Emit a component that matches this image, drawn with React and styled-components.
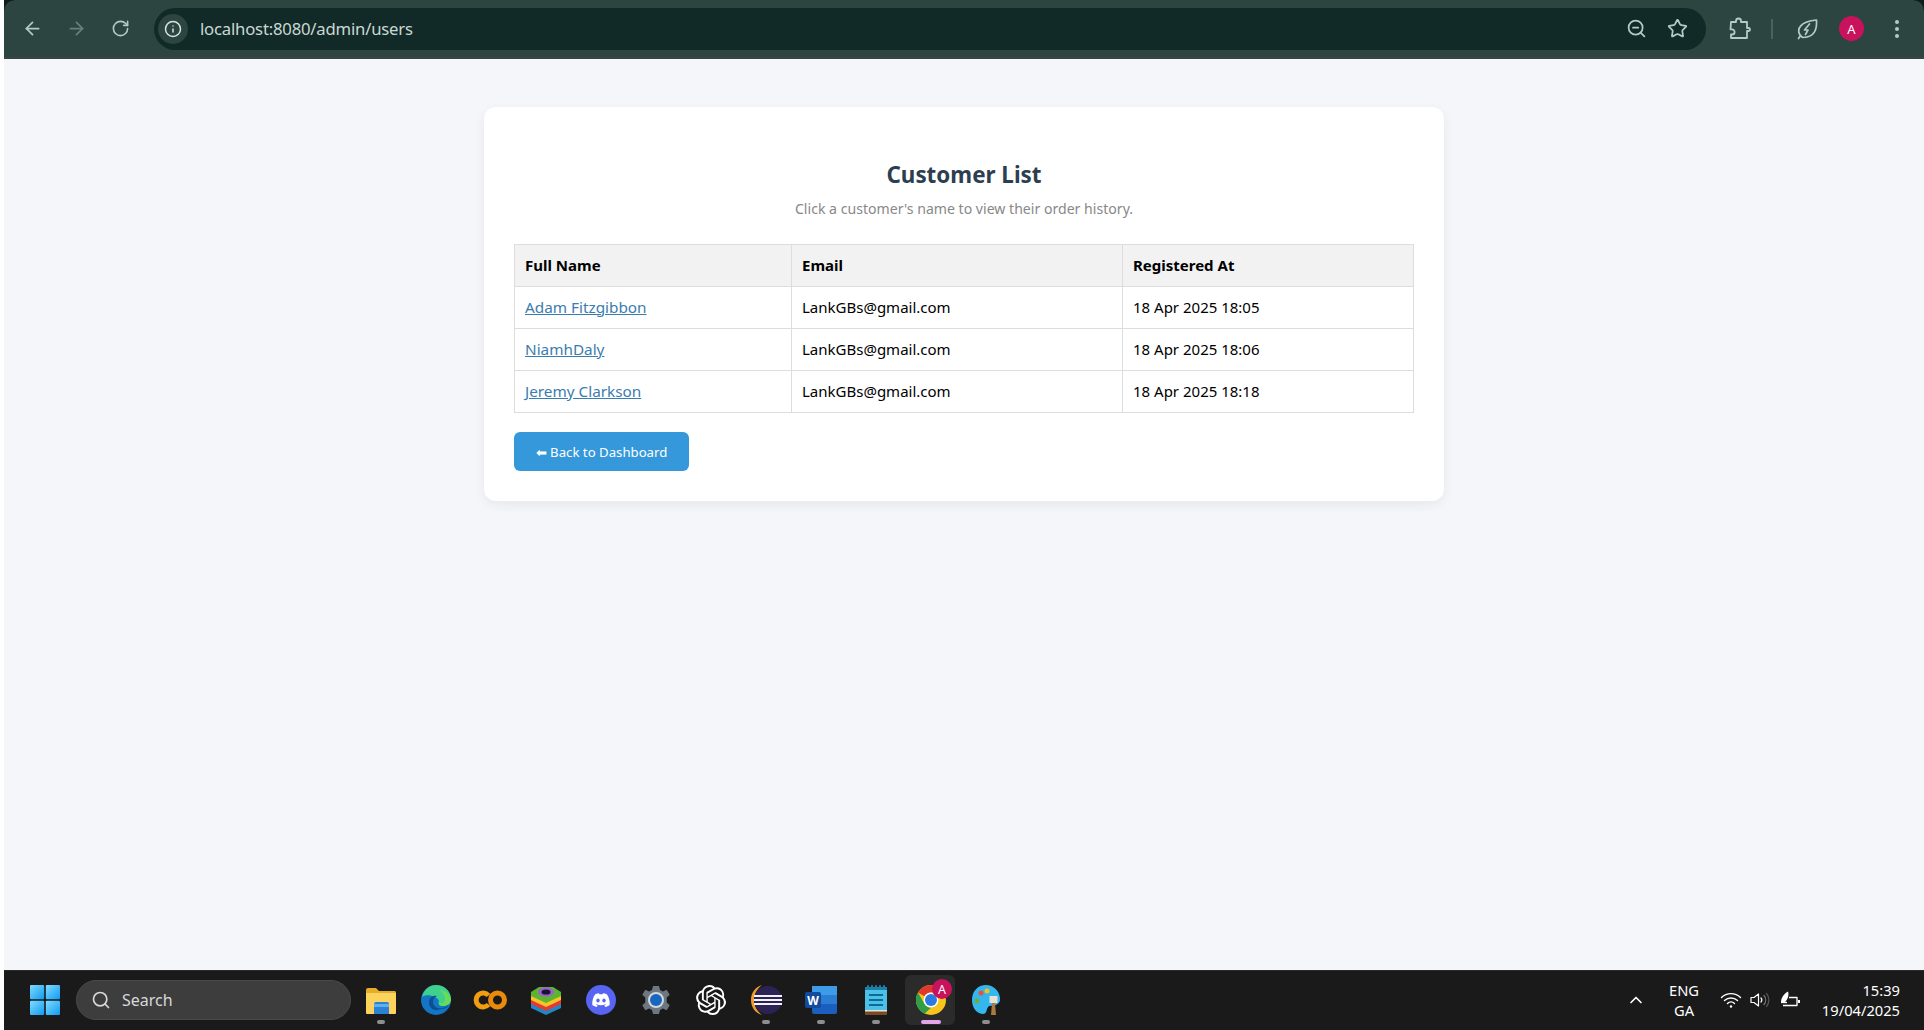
import React from "react";
import styled, { createGlobalStyle } from "styled-components";
import {
  ArrowLeft,
  ArrowRight,
  RotateCw,
  Info,
  ZoomOut,
  Star,
  Search as SearchIcon,
  ChevronUp
} from "lucide-react";
import { SiOpenai } from "react-icons/si";

const GlobalStyle = createGlobalStyle`
  html, body {
    margin: 0;
    padding: 0;
    height: 100%;
    background: #fff;
  }
  body {
    font-family: "Noto Sans", "Open Sans", sans-serif;
    overflow: hidden;
  }
  #root {
    height: 100%;
  }
`;

const Screen = styled.div`
  display: flex;
  flex-direction: column;
  width: 1920px;
  height: 1030px;
  margin-left: 4px;
`;

/* browser toolbar */
const Toolbar = styled.header`
  position: relative;
  flex: none;
  height: 57px;
  display: flex;
  align-items: center;
  background: #2c4541;
  border-bottom: 2px solid #3a4543;
  box-sizing: content-box;
  &::before,
  &::after {
    content: "";
    position: absolute;
    top: 0;
    width: 10px;
    height: 10px;
    background: radial-gradient(circle at var(--c), transparent 9px, #0f1c1a 10px);
  }
  &::before {
    left: 0;
    --c: 100% 100%;
  }
  &::after {
    right: 0;
    --c: 0 100%;
  }
`;

const NavButton = styled.div`
  width: 44px;
  height: 44px;
  flex: none;
  display: flex;
  align-items: center;
  justify-content: center;
  color: ${(p) => (p.$dim ? "#66807b" : "#b3cbc6")};
`;

const NavGroup = styled.div`
  display: flex;
  flex: none;
  padding-left: 6px;
  margin-right: 12px;
`;

const AddressBar = styled.div`
  flex: none;
  width: 1552px;
  height: 42px;
  border-radius: 21px;
  background: #122a27;
  display: flex;
  align-items: center;
  padding: 0 18px 0 4px;
  box-sizing: border-box;
  color: #c6d6d2;
`;

const InfoBadge = styled.div`
  width: 30px;
  height: 30px;
  border-radius: 50%;
  background: #2c4541;
  color: #d7e4e1;
  flex: none;
  display: flex;
  align-items: center;
  justify-content: center;
`;

const Url = styled.span`
  flex: 1;
  margin-left: 12px;
  font-size: 16.7px;
  letter-spacing: -0.2px;
  color: #c9d8d4;
`;

const AddressActions = styled.div`
  display: flex;
  align-items: center;
  gap: 20px;
  color: #b3cbc6;
`;

const ToolbarRight = styled.div`
  display: flex;
  align-items: center;
  margin-left: 21px;
  color: #b3cbc6;
`;

const ToolDivider = styled.div`
  width: 2px;
  height: 20px;
  margin: 0 22px 0 20px;
  background: #4a625e;
`;

const ProfileDot = styled.div`
  width: 25px;
  height: 25px;
  margin-left: 20px;
  border-radius: 50%;
  background: #c8135c;
  color: #fff;
  font-size: 13px;
  display: flex;
  align-items: center;
  justify-content: center;
`;

const MenuDots = styled.div`
  display: flex;
  flex-direction: column;
  gap: 3px;
  margin-left: 31px;
  i {
    display: block;
    width: 4px;
    height: 4px;
    border-radius: 50%;
    background: #b3cbc6;
  }
`;

/* page */
const Main = styled.main`
  flex: 1;
  background: #f4f6f9;
  padding-top: 48px;
  min-height: 0;
`;

const Card = styled.section`
  width: 960px;
  margin: 0 auto;
  box-sizing: border-box;
  padding: 50px 30px 30px;
  background: #fff;
  border-radius: 12px;
  box-shadow: 0 4px 12px rgba(0, 0, 0, 0.06);
`;

const Title = styled.h2`
  margin: 0;
  text-align: center;
  font-size: 22.4px;
  line-height: 36px;
  font-weight: 700;
  color: #2c3e50;
`;

const Subtitle = styled.p`
  margin: 6px 0 0;
  text-align: center;
  font-size: 14.1px;
  line-height: 20px;
  color: #888;
`;

const Table = styled.table`
  width: 899px;
  margin-top: 25px;
  border-collapse: collapse;
  table-layout: fixed;
`;

const Th = styled.th`
  height: 42px;
  padding: 0 10px 2px;
  box-sizing: border-box;
  text-align: left;
  font-weight: 700;
  font-size: 15px;
  color: #000;
  background: #f2f2f2;
  border: 1px solid #ddd;
`;

const Td = styled.td`
  height: 42px;
  padding: 0 10px 2px;
  box-sizing: border-box;
  color: #000;
  font-size: 15px;
  border: 1px solid #ddd;
`;

const NameLink = styled.a`
  color: #3a7cb0;
  font-size: 15.3px;
  text-decoration: underline;
`;

const BackButton = styled.a`
  display: inline-flex;
  align-items: center;
  justify-content: center;
  width: 175px;
  height: 39px;
  margin-top: 19px;
  border-radius: 6px;
  background: #3498db;
  color: #fff;
  font-size: 13.2px;
  text-decoration: none;
`;

/* taskbar */
const Taskbar = styled.footer`
  flex: none;
  height: 60px;
  display: flex;
  align-items: center;
  background: #1a1a1a;
  box-shadow: inset 0 1px 0 #2a2a2a;
  box-sizing: border-box;
  padding-left: 26px;
  color: #fff;
`;

const StartLogo = styled.svg`
  flex: none;
  width: 30px;
  height: 30px;
  margin-right: 16px;
`;

const SearchBox = styled.div`
  flex: none;
  width: 275px;
  height: 40px;
  box-sizing: border-box;
  padding-left: 14px;
  margin-right: 2px;
  border-radius: 20px;
  background: #3d3d3d;
  border: 1px solid #4a4a4a;
  color: #d8d8d8;
  display: flex;
  align-items: center;
  gap: 11px;
  font-size: 16px;
`;

const Pinned = styled.div`
  display: flex;
  flex: none;
`;

const PinnedItem = styled.div`
  position: relative;
  width: 55px;
  height: 50px;
  display: flex;
  align-items: center;
  justify-content: center;
  &::before {
    content: "";
    display: ${(p) => (p.$active ? "block" : "none")};
    position: absolute;
    left: 2px;
    right: 3px;
    top: 0;
    bottom: 0;
    background: #2b2b2b;
    border-radius: 6px;
  }
  &::after {
    content: "";
    display: ${(p) => (p.$dot ? "block" : "none")};
    position: absolute;
    left: 50%;
    bottom: 1px;
    width: ${(p) => (p.$active ? "20px" : "8px")};
    height: 4px;
    transform: translateX(-50%);
    border-radius: 2px;
    background: ${(p) => (p.$active ? "#e4a6e6" : "#8e8e8e")};
  }
  svg {
    position: relative;
    z-index: 1;
    overflow: visible;
  }
`;

const Tray = styled.div`
  margin-left: auto;
  display: flex;
  align-items: center;
  padding-right: 24px;
  font-size: 14.7px;
`;

const Lang = styled.div`
  width: 60px;
  margin-left: 8px;
  margin-right: 6px;
  text-align: center;
  line-height: 20px;
`;

const TrayIcons = styled.div`
  display: flex;
  align-items: center;
  gap: 8px;
  margin-right: 8px;
`;

const Clock = styled.div`
  width: 90px;
  text-align: right;
  line-height: 20px;
`;

const customers = [
  { name: "Adam Fitzgibbon", email: "LankGBs@gmail.com", at: "18 Apr 2025 18:05" },
  { name: "NiamhDaly", email: "LankGBs@gmail.com", at: "18 Apr 2025 18:06" },
  { name: "Jeremy Clarkson", email: "LankGBs@gmail.com", at: "18 Apr 2025 18:18" }
];

const Puzzle = () => (
  <svg width="24" height="24" viewBox="0 0 24 24" fill="none" stroke="currentColor" strokeWidth="1.8" strokeLinejoin="round">
    <path d="M4 5h5V4a2.5 2.5 0 0 1 5 0v1h6v6h1.5a1.5 1.5 0 0 1 0 3H20v7H4v-3.5h1a2.6 2.6 0 0 0 0-5.2H3.5Z" />
  </svg>
);

const LeafBolt = () => (
  <svg width="24" height="24" viewBox="0 0 24 24" fill="none" stroke="currentColor" strokeWidth="1.7" strokeLinejoin="round" strokeLinecap="round">
    <path d="M5 18C1.500 12 5 4.500 21.500 3c.5 9-1.500 17-13 17.500-1.500 0-2.500-1-3.500-2.500Z" />
    <path d="M14.500 7 9.500 13H13l-2.500 4.500" />
    <path d="M3.500 21.500 5.500 18.500" />
  </svg>
);

const Folder = () => (
  <svg width="32" height="30" viewBox="0 0 32 30">
    <path d="M1 5a2 2 0 0 1 2-2h8l3 3h16a2 2 0 0 1 1 2v20H1Z" fill="#e8ab2a" />
    <path d="M1 8h30v20a1 1 0 0 1-1 1H2a1 1 0 0 1-1-1Z" fill="#fcd35c" />
    <path d="M9 19a2 2 0 0 1 2-2h11a2 2 0 0 1 2 2v10H9Z" fill="#2b82d4" />
    <rect x="9" y="19" width="15" height="3" fill="#5bb1ee" />
  </svg>
);

const Edge = () => (
  <svg width="32" height="32" viewBox="0 0 32 32">
    <circle cx="16" cy="16" r="15" fill="#1276c4" />
    <path d="M2 13C4 5 10 1 16 1c8 0 15 6 15 14 0 5-4 7-8 7-5 0-5-3-4-5-1-5-13-8-17-4Z" fill="#3fd08e" />
    <path d="M21 25c-6 3-12 0-12-7 0-4 4-7 8-6-3 1-4 3-4 6 0 6 8 9 16 3-2 3-5 4-8 4Z" fill="#0c4f94" />
    <path d="M19 6c5 0 10 3 12 9 0 5-4 7-8 7-3 0-4-1-4-3 2 1 6 0 6-4 0-4-3-8-6-9Z" fill="#7be040" opacity=".7" />
  </svg>
);

const Colab = () => (
  <svg width="32" height="20" viewBox="0 0 32 20" fill="none" strokeWidth="5">
    <path d="M13.500 5.500a7 7 0 1 0 0 9" stroke="#f39c12" />
    <circle cx="22.500" cy="10" r="7" stroke="#e98a0c" />
  </svg>
);

const BlueStacks = () => (
  <svg width="32" height="30" viewBox="0 0 32 30">
    <path d="M1 18 16 10l15 8v5l-15 7-15-7Z" fill="#1e88c7" />
    <path d="M1 14 16 6l15 8v5l-15 7-15-7Z" fill="#e53935" />
    <path d="M1 10 16 3l15 7v5l-15 7-15-7Z" fill="#f7c325" />
    <path d="M1 7 9 2h14l8 5v4l-15 7-15-7Z" fill="#5cb531" />
    <ellipse cx="16" cy="7" rx="8" ry="4.500" fill="#9d5fd0" />
    <ellipse cx="16" cy="7" rx="4.500" ry="2.600" fill="#15152e" />
  </svg>
);

const Discord = () => (
  <svg width="30" height="30" viewBox="0 0 30 30">
    <circle cx="15" cy="15" r="15" fill="#5865f2" />
    <path d="M9 9.500c2-1 3.500-1.200 4-1.200l.4.9c1-.1 2.200-.1 3.200 0l.4-.9c.5 0 2 .2 4 1.200 2 3 3 6.500 2.700 10.500-1.500 1.200-3.200 1.800-4.400 2l-1-1.500c.6-.2 1.200-.5 1.700-.9l-.4-.3c-2.800 1.300-6.400 1.300-9.200 0l-.4.300c.5.400 1.100.7 1.700.9l-1 1.500c-1.200-.2-2.900-.8-4.400-2C6 16 7 12.500 9 9.500Z" fill="#fff" />
    <ellipse cx="12" cy="15.500" rx="1.700" ry="2" fill="#5865f2" />
    <ellipse cx="18" cy="15.500" rx="1.700" ry="2" fill="#5865f2" />
  </svg>
);

const Gear = () => (
  <svg width="30" height="30" viewBox="0 0 30 30">
    <path d="M12 1h6l1 4 3 1.500 3.700-1.800 3 5-3 2.800v5l3 2.800-3 5-3.700-1.800L19 25l-1 4h-6l-1-4-3-1.500-3.700 1.800-3-5 3-2.800v-5l-3-2.800 3-5L8 6.500 11 5Z" fill="#6e7780" />
    <circle cx="15" cy="15" r="8" fill="#d4d8dc" />
    <circle cx="15" cy="15" r="6" fill="#1766c0" />
  </svg>
);

const Eclipse = () => (
  <svg width="32" height="32" viewBox="0 0 32 32">
    <path d="M12 1C5 3 1 9 1 16s4 13 11 15C7 27 4 22 4 16S7 5 12 1Z" fill="#f09a2e" />
    <circle cx="18" cy="16" r="14" fill="#2c2255" />
    <rect x="4" y="11" width="28" height="2" fill="#f3f0fa" />
    <rect x="4" y="15" width="28" height="2" fill="#f3f0fa" />
    <rect x="4" y="19" width="28" height="2" fill="#f3f0fa" />
  </svg>
);

const Word = () => (
  <svg width="32" height="30" viewBox="0 0 32 30">
    <rect x="7" y="1" width="25" height="28" rx="2" fill="#1b5fbe" />
    <rect x="7" y="1" width="25" height="9" fill="#3e9be8" />
    <rect x="7" y="10" width="25" height="9" fill="#2b7cd3" />
    <rect x="0" y="7" width="16" height="16" rx="2" fill="#124a9e" />
    <text x="8" y="19.500" fontSize="12" fontWeight="700" fontFamily="Noto Sans, sans-serif" fill="#fff" textAnchor="middle">W</text>
  </svg>
);

const Notepad = () => (
  <svg width="22" height="30" viewBox="0 0 22 30">
    <rect x="0" y="2" width="22" height="28" rx="2" fill="#4cc0e8" />
    <path d="M0 26h22v2a2 2 0 0 1-2 2H2a2 2 0 0 1-2-2Z" fill="#7a4a25" />
    <rect x="0" y="25" width="22" height="1.500" fill="#e8e2d4" />
    <rect x="4" y="9" width="14" height="2" fill="#0c6d93" />
    <rect x="4" y="14" width="14" height="2" fill="#0c6d93" />
    <rect x="4" y="19" width="14" height="2" fill="#0c6d93" />
    <rect x="0" y="2" width="22" height="3" fill="#1e7fa8" />
    {[2, 6, 10, 14, 18].map((x) => (
      <rect key={x} x={x} y="0" width="2" height="4" rx="1" fill="#1e7fa8" />
    ))}
  </svg>
);

const Chrome = () => (
  <svg width="30" height="30" viewBox="0 0 30 30">
    <circle cx="15" cy="15" r="15" fill="#f9c41c" />
    <path d="M15 0a15 15 0 0 1 13 7.500H15a7.500 7.500 0 0 0-6.500 3.700L2 7.500A15 15 0 0 1 15 0Z" fill="#e0392c" />
    <path d="M2 7.500 8.500 19a7.500 7.500 0 0 0 6.500 3.700l-6.500 6A15 15 0 0 1 2 7.500Z" fill="#2f9e47" />
    <circle cx="15" cy="15" r="7.500" fill="#fff" />
    <circle cx="15" cy="15" r="6" fill="#2a7ae2" />
    <circle cx="26" cy="4" r="10" fill="#c8135c" />
    <text x="26" y="8.500" fontSize="12.500" fontFamily="Noto Sans, sans-serif" fill="#fff" textAnchor="middle">A</text>
  </svg>
);

const Palette = () => (
  <svg width="28" height="30" viewBox="0 0 28 30">
    <path d="M14 0C6 0 0 6 0 15s6 14 11 14c4 0 3-4 5-7s8 1 12-6C29 7 22 0 14 0Z" fill="#34b6ef" />
    <circle cx="5" cy="16" r="2.500" fill="#6fae3a" />
    <circle cx="9" cy="8" r="2.500" fill="#e5533d" />
    <circle cx="15" cy="6" r="2.500" fill="#f4c020" />
    <path d="M20 18h3l1 12h-5Z" fill="#a87a3e" />
    <path d="M17.500 11h8v7h-8Z" fill="#e7e2d2" />
  </svg>
);

const Wifi = () => (
  <svg width="22" height="18" viewBox="0 0 22 18" fill="none" stroke="#fff" strokeWidth="1.400" strokeLinecap="round">
    <path d="M1.500 6.500a13.500 13.500 0 0 1 19 0" />
    <path d="M4.500 9.500a9.500 9.500 0 0 1 13 0" />
    <path d="M7.500 12.500a5 5 0 0 1 7 0" />
    <circle cx="11" cy="15.500" r="1.200" fill="#fff" stroke="none" />
  </svg>
);

const Speaker = () => (
  <svg width="22" height="18" viewBox="0 0 22 18" fill="none" stroke="#fff" strokeWidth="1.200" strokeLinejoin="round" strokeLinecap="round">
    <path d="M1 6.500h3L8.500 3v12L4 11.500H1Z" />
    <path d="M11 7a3 3 0 0 1 0 4" />
    <path d="M14 4.500a7 7 0 0 1 0 9" stroke="#777" />
    <path d="M16.500 2.500a10 10 0 0 1 0 13" stroke="#555" />
  </svg>
);

const Battery = () => (
  <svg width="22" height="18" viewBox="0 0 22 18" fill="none" stroke="#fff" strokeWidth="1.300" strokeLinejoin="round">
    <path d="M3 14.500h14v-8H9" />
    <path d="M19 9v3" strokeWidth="2" />
    <path d="M1 11c0-5 4-9 7-10.500 1.500 4-1 9-3 10.500Z" fill="#fff" stroke="none" />
    <path d="M1 11.500h6" />
  </svg>
);

const pinned = [
  { key: "folder", icon: <Folder />, dot: true },
  { key: "edge", icon: <Edge /> },
  { key: "colab", icon: <Colab /> },
  { key: "bluestacks", icon: <BlueStacks /> },
  { key: "discord", icon: <Discord /> },
  { key: "gear", icon: <Gear /> },
  { key: "openai", icon: <SiOpenai size={30} color="#fff" /> },
  { key: "eclipse", icon: <Eclipse />, dot: true },
  { key: "word", icon: <Word />, dot: true },
  { key: "notepad", icon: <Notepad />, dot: true },
  { key: "chrome", icon: <Chrome />, dot: true, active: true },
  { key: "palette", icon: <Palette />, dot: true }
];

export default function App() {
  return (
    <>
      <GlobalStyle />
      <Screen>
        <Toolbar>
          <NavGroup>
            <NavButton><ArrowLeft size={21} /></NavButton>
            <NavButton $dim><ArrowRight size={21} /></NavButton>
            <NavButton><RotateCw size={19} /></NavButton>
          </NavGroup>
          <AddressBar>
            <InfoBadge><Info size={18} /></InfoBadge>
            <Url>localhost:8080/admin/users</Url>
            <AddressActions>
              <ZoomOut size={21} />
              <Star size={21} />
            </AddressActions>
          </AddressBar>
          <ToolbarRight>
            <Puzzle />
            <ToolDivider />
            <LeafBolt />
            <ProfileDot>A</ProfileDot>
            <MenuDots><i /><i /><i /></MenuDots>
          </ToolbarRight>
        </Toolbar>
        <Main>
          <Card>
            <Title>Customer List</Title>
            <Subtitle>Click a customer's name to view their order history.</Subtitle>
            <Table>
              <colgroup>
                <col width="277" />
                <col width="331" />
                <col width="291" />
              </colgroup>
              <thead>
                <tr>
                  <Th>Full Name</Th>
                  <Th>Email</Th>
                  <Th>Registered At</Th>
                </tr>
              </thead>
              <tbody>
                {customers.map((c) => (
                  <tr key={c.name}>
                    <Td><NameLink href="#">{c.name}</NameLink></Td>
                    <Td>{c.email}</Td>
                    <Td>{c.at}</Td>
                  </tr>
                ))}
              </tbody>
            </Table>
            <BackButton href="#">⬅ Back to Dashboard</BackButton>
          </Card>
        </Main>
        <Taskbar>
          <StartLogo viewBox="0 0 30 30">
            <defs>
              <linearGradient id="win" x1="0" y1="0" x2="1" y2="1">
                <stop offset="0" stopColor="#7fdcff" />
                <stop offset="1" stopColor="#0f9bf2" />
              </linearGradient>
            </defs>
            <rect x="0" y="0" width="14.200" height="14.200" rx="1" fill="url(#win)" />
            <rect x="15.800" y="0" width="14.200" height="14.200" rx="1" fill="url(#win)" />
            <rect x="0" y="15.800" width="14.200" height="14.200" rx="1" fill="url(#win)" />
            <rect x="15.800" y="15.800" width="14.200" height="14.200" rx="1" fill="url(#win)" />
          </StartLogo>
          <SearchBox>
            <SearchIcon size={20} />
            Search
          </SearchBox>
          <Pinned>
            {pinned.map((p) => (
              <PinnedItem key={p.key} $dot={p.dot} $active={p.active}>{p.icon}</PinnedItem>
            ))}
          </Pinned>
          <Tray>
            <ChevronUp size={20} />
            <Lang>ENG<br />GA</Lang>
            <TrayIcons>
              <Wifi />
              <Speaker />
              <Battery />
            </TrayIcons>
            <Clock>15:39<br />19/04/2025</Clock>
          </Tray>
        </Taskbar>
      </Screen>
    </>
  );
}
